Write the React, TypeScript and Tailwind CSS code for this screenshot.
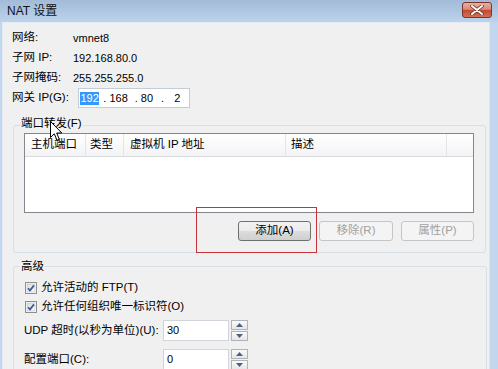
import React from "react";

function CheckBox() {
  return (
    <svg width="12" height="12" viewBox="0 0 12 12" className="shrink-0">
      <defs>
        <linearGradient id="cbg" x1="0" y1="0" x2="1" y2="1">
          <stop offset="0" stopColor="#dcdcdc" />
          <stop offset="1" stopColor="#fbfbfb" />
        </linearGradient>
      </defs>
      <rect x="0.5" y="0.5" width="11" height="11" fill="#fff" stroke="#8e8f8f" />
      <rect x="2" y="2" width="8" height="8" fill="url(#cbg)" stroke="#b8bec6" strokeWidth="0.6" />
      <path d="M3 6.2 L5 8.4 L9 3.4" fill="none" stroke="#3c5a96" strokeWidth="1.7" />
    </svg>
  );
}

function Spinner() {
  const btn =
    "w-[17px] h-[10px] border border-[#b0b3b8] bg-[linear-gradient(to_bottom,#fbfbfb,#e6e6e6)] flex items-center justify-center";
  return (
    <div className="flex flex-col gap-[1px] ml-[2px]">
      <div className={btn}>
        <svg width="7" height="4" viewBox="0 0 7 4">
          <path d="M0 4 L3.5 0 L7 4 Z" fill="#4c5f86" />
        </svg>
      </div>
      <div className={btn}>
        <svg width="7" height="4" viewBox="0 0 7 4">
          <path d="M0 0 L3.5 4 L7 0 Z" fill="#4c5f86" />
        </svg>
      </div>
    </div>
  );
}

export default function App() {
  const disabledBtn =
    "h-[20px] rounded-[3px] border border-[#c3c6c9] bg-[#f4f4f4] text-[#a0a0a0] flex items-center justify-center";
  return (
    <div className="w-[498px] h-[369px] overflow-hidden relative bg-[#c2d7ee] flex flex-col font-['Liberation_Sans','Noto_Sans_CJK_SC',sans-serif] text-[11.5px] text-black leading-none">
      {/* Title bar */}
      <div className="h-[22px] shrink-0 flex items-start justify-between bg-[linear-gradient(to_bottom,#a2bbd9,#bcd3eb)] pl-[7px] pr-[6px]">
        <span className="text-[12px] leading-[22px] text-[#111]">NAT 设置</span>
        <div className="mt-[2px] w-[30px] h-[16px] rounded-[3px] border border-[#7a3428] bg-[linear-gradient(to_bottom,#e7b0a2_0%,#d98a76_45%,#c44a2e_52%,#d2705a_100%)] flex items-center justify-center">
          <svg width="14" height="10" viewBox="0 0 14 10">
            <path d="M2 1 L12 9 M12 1 L2 9" stroke="#5a2a22" strokeWidth="3.4" strokeLinecap="round" />
            <path d="M2 1 L12 9 M12 1 L2 9" stroke="#ffffff" strokeWidth="2" strokeLinecap="round" />
          </svg>
        </div>
      </div>

      {/* Body */}
      <div className="flex-1 flex">
        <div className="w-[2px] shrink-0" />
        <div className="flex-1 bg-[#f0f0f0] border-t border-l border-[#e4ebf3] border-r-[#dce5ef] border-r">
          {/* Info rows */}
          <div className="pt-[5px] pl-[9px]">
            <div className="h-[20px] flex items-center">
              <span className="w-[61px]">网络:</span>
              <span className="text-[11px]">vmnet8</span>
            </div>
            <div className="h-[20px] flex items-center">
              <span className="w-[61px]">子网 IP:</span>
              <span className="text-[11px]">192.168.80.0</span>
            </div>
            <div className="h-[20px] flex items-center">
              <span className="w-[61px]">子网掩码:</span>
              <span className="text-[11px]">255.255.255.0</span>
            </div>
            <div className="h-[20px] flex items-center">
              <span className="w-[66px]">网关 IP(G):</span>
              <div className="w-[112px] h-[20px] border border-[#c4ccd5] bg-white flex items-center text-[11px] pl-[1px]">
                <span className="bg-[#3399ff] text-white px-[0.5px] h-[13px] flex items-center">192</span>
                <span className="ml-[4px]">.</span>
                <span className="ml-[3px]">168</span>
                <span className="ml-[7px]">.</span>
                <span className="ml-[3px]">80</span>
                <span className="ml-[8px]">.</span>
                <span className="ml-[10px]">2</span>
              </div>
            </div>
          </div>

          {/* Port forwarding group */}
          <div className="relative mt-[17px] ml-[10px] w-[473px] h-[128px] border border-[#d5dfe5] rounded-[3px] pt-[7px] pl-[10px] pr-[11px]">
            <span className="absolute left-[6px] top-[-11px] px-[1px] bg-[#f0f0f0] leading-[16px]">端口转发(F)</span>
            <div className="h-[80px] border border-[#828790] bg-white">
              <div className="h-[23px] flex bg-[linear-gradient(to_bottom,#ffffff,#f3f4f6)] border-b border-[#d8dadc]">
                <div className="w-[61px] border-r border-[#e3e5e8] pl-[6px] flex items-center">主机端口</div>
                <div className="w-[38px] border-r border-[#e3e5e8] pl-[4px] flex items-center">类型</div>
                <div className="w-[162px] border-r border-[#e3e5e8] pl-[6px] flex items-center">虚拟机 IP 地址</div>
                <div className="w-[161px] border-r border-[#e3e5e8] pl-[5px] flex items-center">描述</div>
                <div className="flex-1" />
              </div>
            </div>
            <div className="mt-[8px] flex justify-end gap-[8px]">
              <div className="w-[73px] h-[20px] rounded-[3px] border border-[#707070] bg-[linear-gradient(to_bottom,#f2f2f2_0%,#ebebeb_50%,#dddddd_51%,#cfcfcf_100%)] flex items-center justify-center">
                添加(A)
              </div>
              <div className={disabledBtn + " w-[74px]"}>移除(R)</div>
              <div className={disabledBtn + " w-[73px]"}>属性(P)</div>
            </div>
          </div>

          {/* Advanced group */}
          <div className="relative mt-[13px] ml-[10px] w-[474px] h-[130px] border border-[#d5dfe5] rounded-[3px] pt-[11px]">
            <span className="absolute left-[6px] top-[-9px] px-[1px] bg-[#f0f0f0] leading-[16px]">高级</span>
            <div className="h-[19px] flex items-center pl-[11px] gap-[4px]">
              <CheckBox />
              <span>允许活动的 FTP(T)</span>
            </div>
            <div className="h-[19px] flex items-center pl-[11px] gap-[4px]">
              <CheckBox />
              <span>允许任何组织唯一标识符(O)</span>
            </div>
            <div className="mt-[4px] h-[21px] flex items-center pl-[10px]">
              <span className="w-[139px]">UDP 超时(以秒为单位)(U):</span>
              <div className="w-[66px] h-[21px] border border-[#d0d5db] bg-white pl-[3px] flex items-center text-[11px]">30</div>
              <Spinner />
            </div>
            <div className="mt-[8px] h-[21px] flex items-center pl-[10px]">
              <span className="w-[139px]">配置端口(C):</span>
              <div className="w-[66px] h-[21px] border border-[#d0d5db] bg-white pl-[3px] flex items-center text-[11px]">0</div>
              <Spinner />
            </div>
          </div>
        </div>
        <div className="w-[8px] shrink-0" />
      </div>

      {/* Red annotation rectangle */}
      <div className="absolute left-[196px] top-[207px] w-[121px] h-[46px] border border-[#c8323a]" />

      {/* Mouse cursor */}
      <svg className="absolute left-[50px] top-[121px]" width="13" height="21" viewBox="0 0 13 21">
        <path
          d="M0.5 0.5 L0.5 16.5 L4.3 12.8 L7 19.3 L9.3 18.3 L6.7 12 L11.8 12 Z"
          fill="#ffffff"
          stroke="#000000"
          strokeWidth="1"
          strokeLinejoin="round"
        />
      </svg>
    </div>
  );
}
